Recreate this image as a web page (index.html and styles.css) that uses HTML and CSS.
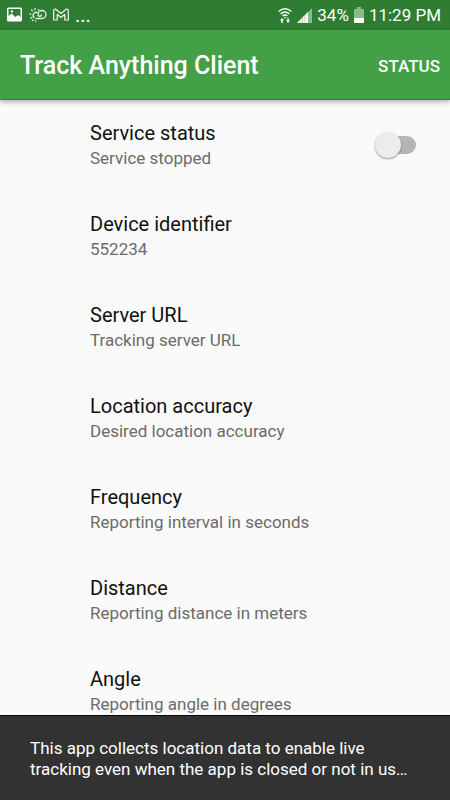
FILE: index.html
```html
<!DOCTYPE html>
<html lang="en">
<head>
<meta charset="utf-8">
<meta name="viewport" content="width=device-width, initial-scale=1">
<title>Track Anything Client</title>
<link rel="stylesheet" href="styles.css">
</head>
<body>
<div class="screen">
  <div class="statusbar">
    <div class="notifications">
      <svg width="16" height="16" viewBox="0 0 16 16"><path fill="#fff" fill-rule="evenodd" d="M1.500 0.500h12q1.500 0 1.500 1.500v11q0 1.500-1.500 1.500h-12q-1.500 0-1.500-1.500v-11q0-1.500 1.500-1.500zM1.500 2v7l3-2.500 4 3.500 2.500-2 2.500 2V2z"/><circle cx="5" cy="4.500" r="1.200" fill="#fff"/></svg>
      <svg width="18" height="16" viewBox="0 0 18 16" fill="none" stroke="#e4f1e5" stroke-width="1.400" stroke-linecap="round"><path d="M7 11.500h6a4 4 0 1 0-4-4c0 2 3 2.500 3.500.5M8 5.500a3 3 0 0 0-3 5"/><path d="M6 1.500v1M2.500 3l.7.7M.9 7h.8M2 11l.6-.5M9.500 3l.3-.3M3.500 13.500l.4-.4M6.500 14v.3"/></svg>
      <svg width="16" height="16" viewBox="0 0 16 16" fill="none" stroke="#f2f8f2" stroke-width="1.200" stroke-linejoin="round"><path d="M.7 13V3.500Q.7 2 2.500 2L8 6.500 13.500 2q1.800 0 1.800 1.500V13h-3.500V7.300L8 10.500 4.200 7.300V13z"/></svg>
      <span class="more">...</span>
    </div>
    <div class="system">
      <svg width="14" height="17" viewBox="0 0 14 17"><g fill="none" stroke="#fff" stroke-width="1.500"><path d="M.7 4.500Q7-.9 13.300 4.500M2.700 6.800q4.300-3.600 8.600 0M4.600 9q2.400-2 4.800 0"/></g><path fill="#fff" d="M5.500 10.200h3L7 11.800zM4 11l2 2.500H4.700V16H3.300v-2.500H2zM10 16l-2-2.500h1.300V11h1.400v2.500H12z"/></svg>
      <svg width="15" height="15" viewBox="0 0 15 15"><path fill="#8abb8d" d="M15 0v15H0z"/><path fill="#fff" d="M11 4v11H0z"/><path stroke="#6da371" stroke-width=".5" d="M3 12v3M5.500 9.500V15M8 7v8"/></svg>
      <span class="battery-text">34%</span>
      <svg width="10" height="16" viewBox="0 0 10 16"><path fill="#8abb8d" d="M3 0h4v2h3v9H0V2h3z"/><path fill="#fff" d="M0 11h10v4q0 1-1 1H1q-1 0-1-1z"/></svg>
      <span class="clock">11:29 PM</span>
    </div>
  </div>
  <header class="appbar">
    <h1>Track Anything Client</h1>
    <button type="button">STATUS</button>
  </header>
  <main class="settings">
    <div class="setting">
      <label class="text" for="service"><span class="name">Service status</span><span class="summary">Service stopped</span></label>
      <input class="switch" type="checkbox" role="switch" id="service">
    </div>
    <div class="setting"><div class="text"><span class="name">Device identifier</span><span class="summary">552234</span></div></div>
    <div class="setting"><div class="text"><span class="name">Server URL</span><span class="summary">Tracking server URL</span></div></div>
    <div class="setting"><div class="text"><span class="name">Location accuracy</span><span class="summary">Desired location accuracy</span></div></div>
    <div class="setting"><div class="text"><span class="name">Frequency</span><span class="summary">Reporting interval in seconds</span></div></div>
    <div class="setting"><div class="text"><span class="name">Distance</span><span class="summary">Reporting distance in meters</span></div></div>
    <div class="setting"><div class="text"><span class="name">Angle</span><span class="summary">Reporting angle in degrees</span></div></div>
  </main>
  <div class="snackbar" role="status"><p>This app collects location data to enable live tracking even when the app is closed or not in us…</p></div>
</div>
</body>
</html>
```
FILE: styles.css
```css
* { box-sizing: border-box; }
body {
  margin: 0;
  background: #fafafa;
  font-family: Roboto, "Liberation Sans", sans-serif;
}
.screen {
  display: flex;
  flex-direction: column;
  height: 100vh;
  overflow: hidden;
}
.statusbar {
  display: flex;
  flex: none;
  justify-content: space-between;
  align-items: center;
  height: 30px;
  padding: 0 9px 0 7px;
  background: #2e7d32;
  color: #fff;
}
.notifications, .system { display: flex; align-items: center; }
.notifications { gap: 6px; }
.more { font-size: 20px; line-height: 24px; }
.system { gap: 5px; font-size: 17px; line-height: 30px; }
.appbar {
  display: flex;
  flex: none;
  z-index: 1;
  justify-content: space-between;
  align-items: center;
  height: 70px;
  padding: 3px 10px 0 20px;
  background: #43a047;
  border-bottom: 1px solid #1c921f;
  box-shadow: 0 2px 5px rgba(0, 0, 0, .3);
  color: #fff;
}
.appbar h1 { margin: 0; font-size: 25px; font-weight: 500; line-height: 30px; }
.appbar button {
  padding: 0;
  border: 0;
  background: none;
  color: inherit;
  font: 500 17px/24px Roboto, sans-serif;
}
.settings { flex: 1; min-height: 0; overflow: hidden; }
.setting {
  display: flex;
  justify-content: space-between;
  align-items: center;
  height: 91px;
  padding: 0 34px 2px 90px;
}
.text { display: flex; flex-direction: column; }
.name { color: #111; font-size: 20px; line-height: 26px; }
.summary { color: #6b6b6b; font-size: 17px; line-height: 24px; }
.switch {
  position: relative;
  appearance: none;
  width: 36px;
  height: 18px;
  margin: 0;
  border-radius: 9px;
  background: #b5b5b5;
}
.switch::before {
  content: "";
  position: absolute;
  top: -4px;
  left: -5px;
  width: 26px;
  height: 26px;
  border-radius: 50%;
  background: #ececec;
  box-shadow: 0 1px 2px rgba(0, 0, 0, .4);
}
.switch:checked { background: #a1cfa3; }
.switch:checked::before { left: 15px; background: #43a047; }
.snackbar {
  flex: none;
  padding: 22px 30px 20px;
  border-top: 1px solid #080808;
  background: #323232;
  color: #fff;
  font-size: 17px;
  line-height: 21px;
}
.snackbar p { margin: 0; }
```
